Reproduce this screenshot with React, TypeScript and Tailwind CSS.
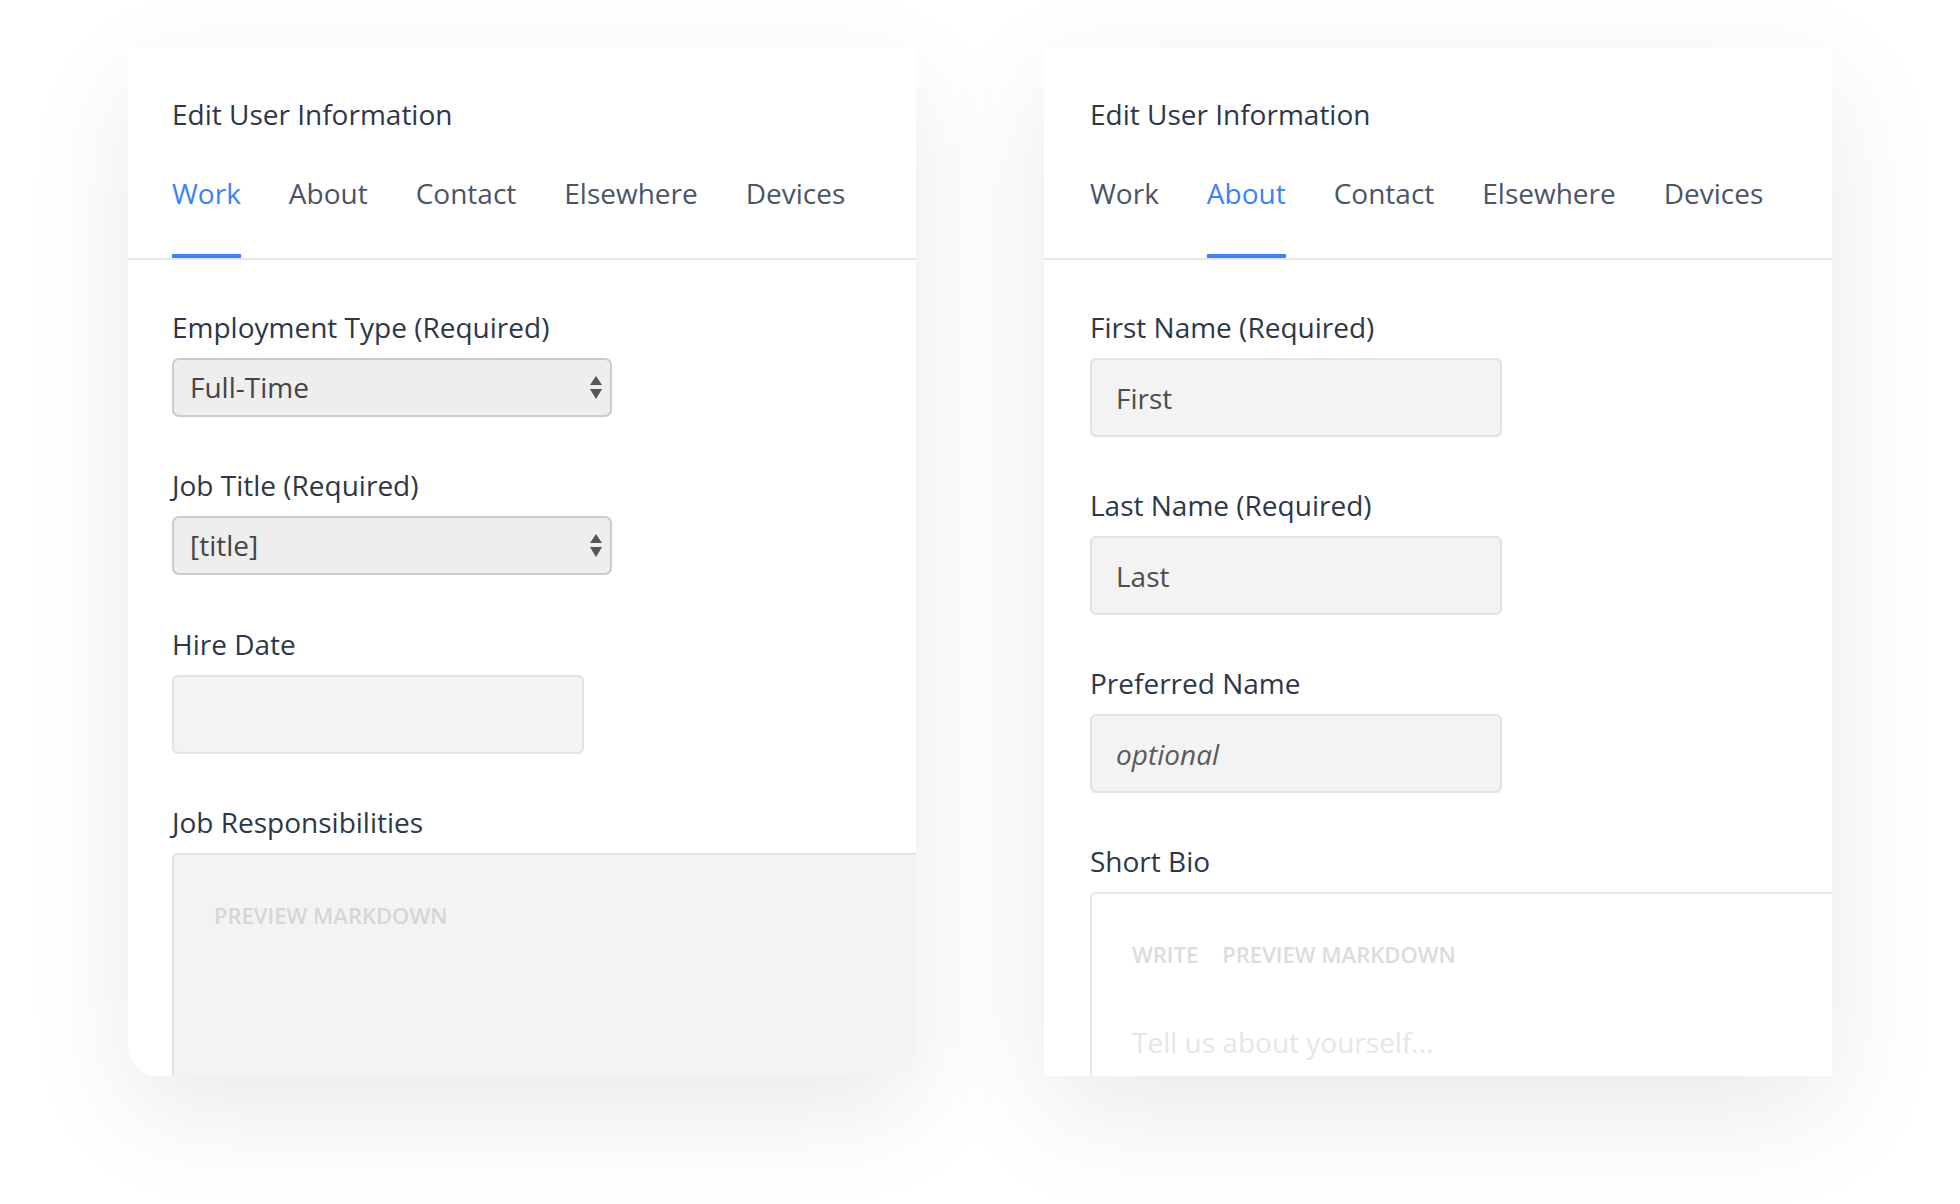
import React from "react";

const tabs = ["Work", "About", "Contact", "Elsewhere", "Devices"];

function Label({ children }: { children: React.ReactNode }) {
  return <div className="text-[28px] leading-[40px] text-[#2d3748] mb-[11px]">{children}</div>;
}

function Arrows() {
  return (
    <svg width="12" height="23" viewBox="0 0 12 23" className="shrink-0">
      <path d="M6 0 L12 9 H0 Z" fill="#555555" />
      <path d="M0 13 H12 L6 23 Z" fill="#555555" />
    </svg>
  );
}

function SelectBox({ value }: { value: string }) {
  return (
    <div className="w-[440px] h-[59px] flex items-center justify-between pl-[16px] pr-[8px] bg-[#eeeeee] border-2 border-[#cbcbcb] rounded-[7px]">
      <span className="text-[28px] leading-[40px] -mt-[1px] text-[#454545]">{value}</span>
      <Arrows />
    </div>
  );
}

function TextBox({ value, italic }: { value?: string; italic?: boolean }) {
  return (
    <div className="w-[412px] h-[79px] flex items-center pl-[24px] bg-[#f3f3f3] border-2 border-[#e2e2e2] rounded-[6px]">
      {value ? (
        <span
          className={
            italic
              ? "text-[28px] leading-[40px] italic text-[#5a5a5a]"
              : "text-[28px] leading-[40px] text-[#4d4d4d]"
          }
        >
          {value}
        </span>
      ) : null}
    </div>
  );
}

function TabBar({ active, pad }: { active: string; pad: string }) {
  return (
    <div className={`${pad} border-b-2 border-[#e8e8e8]`}>
      <div className="mt-[39px] flex gap-[48px]">
        {tabs.map((t) => (
          <div
            key={t}
            className={
              t === active
                ? "pb-[41px] border-b-4 border-[#3b82f6] text-[28px] leading-[40px] text-[#3b82f6]"
                : "pb-[41px] border-b-4 border-transparent text-[28px] leading-[40px] text-[#4a5568]"
            }
          >
            {t}
          </div>
        ))}
      </div>
    </div>
  );
}

export default function App() {
  return (
    <div className="w-[1960px] h-[1204px] bg-white overflow-hidden font-['Open_Sans',sans-serif]">
      <div className="flex gap-[128px] pl-[128px] pt-[48px]">
        {/* Left card */}
        <div className="w-[788px] h-[1028px] bg-white rounded-b-[30px] overflow-hidden shadow-[0_36px_110px_rgba(0,0,0,0.085)] shrink-0">
          <div className="pl-[44px] pt-[46px]">
            <div className="text-[28px] leading-[40px] text-[#2d3748]">Edit User Information</div>
          </div>
          <TabBar active="Work" pad="pl-[44px]" />
          <div className="pl-[44px] pt-[47px] flex flex-col gap-[48px]">
            <div>
              <Label>Employment Type (Required)</Label>
              <SelectBox value="Full-Time" />
            </div>
            <div>
              <Label>Job Title (Required)</Label>
              <SelectBox value="[title]" />
            </div>
            <div className="mt-[1px]">
              <Label>Hire Date</Label>
              <TextBox />
            </div>
            <div>
              <Label>Job Responsibilities</Label>
              <div className="w-[800px] h-[400px] bg-[#f3f3f3] border-t-2 border-l-2 border-[#e2e2e2] rounded-tl-[6px] pl-[40px] pt-[45px]">
                <div className="text-[22px] leading-[30px] font-semibold text-[#d6d6d6]">PREVIEW MARKDOWN</div>
              </div>
            </div>
          </div>
        </div>

        {/* Right card */}
        <div className="w-[788px] h-[1028px] bg-white overflow-hidden shadow-[0_36px_110px_rgba(0,0,0,0.085)] shrink-0">
          <div className="pl-[46px] pt-[46px]">
            <div className="text-[28px] leading-[40px] text-[#2d3748]">Edit User Information</div>
          </div>
          <TabBar active="About" pad="pl-[46px]" />
          <div className="pl-[46px] pt-[47px] flex flex-col gap-[48px]">
            <div>
              <Label>First Name (Required)</Label>
              <TextBox value="First" />
            </div>
            <div>
              <Label>Last Name (Required)</Label>
              <TextBox value="Last" />
            </div>
            <div>
              <Label>Preferred Name</Label>
              <TextBox value="optional" italic />
            </div>
            <div>
              <Label>Short Bio</Label>
              <div className="w-[800px] h-[400px] bg-white border-t-2 border-l-2 border-[#e6e6e6] rounded-tl-[6px] pl-[40px] pt-[45px]">
                <div className="flex gap-[24px] text-[22px] leading-[30px] font-semibold text-[#dcdcdc]">
                  <span>WRITE</span>
                  <span>PREVIEW MARKDOWN</span>
                </div>
                <div className="mt-[53px] text-[28px] leading-[40px] text-[#e6e6e6]">Tell us about yourself...</div>
              </div>
            </div>
          </div>
        </div>
      </div>
    </div>
  );
}
